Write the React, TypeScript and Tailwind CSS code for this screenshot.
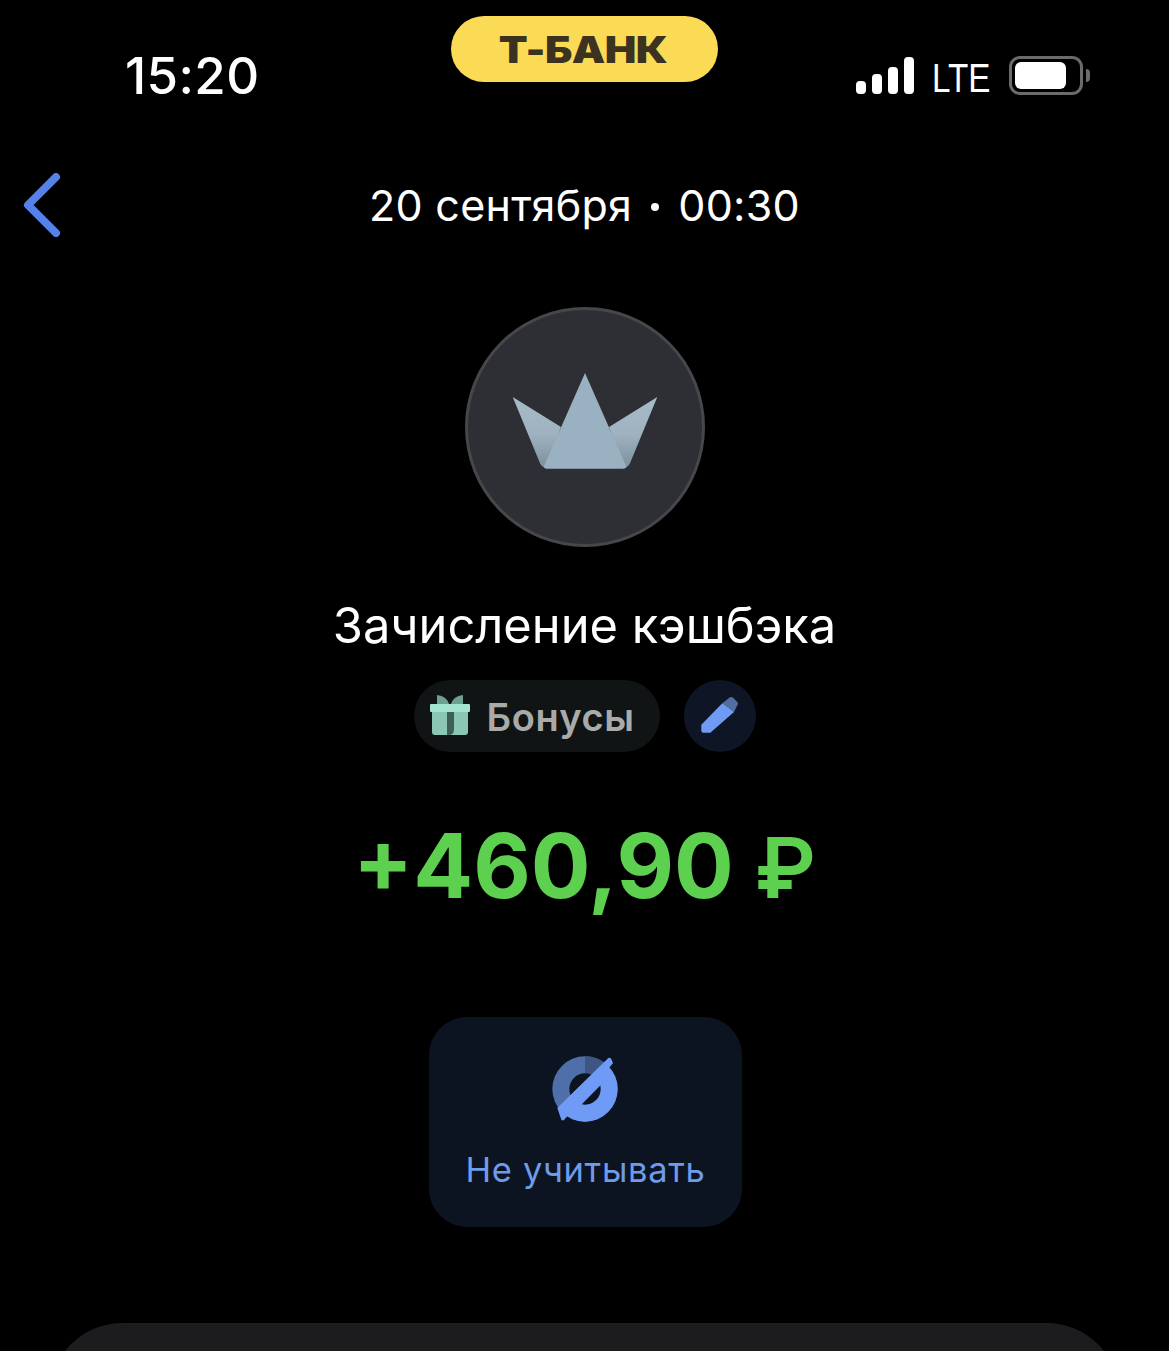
const sans = "font-['Inter','Noto_Sans',sans-serif]"

function CrownIcon() {
    return (
        <svg className="w-[150px] h-[102px] mb-[12px]" viewBox="510 370 150 102">
            <defs>
                <linearGradient id="wing" x1="0" y1="0" x2="0" y2="1">
                    <stop offset="0%" stopColor="#a6bac8" />
                    <stop offset="50%" stopColor="#9fb3c1" />
                    <stop offset="100%" stopColor="#7d909e" />
                </linearGradient>
            </defs>
            <path d="M512.7 397 L561 427 L546 468 Q541 467 539.5 462 Z" fill="url(#wing)" />
            <path d="M657.3 397 L609 427 L624 468 Q629 467 630.5 462 Z" fill="url(#wing)" />
            <path d="M585 373 L626 466 Q626.5 468.7 623 468.7 L547 468.7 Q543.5 468.7 544 466 Z" fill="#9ab1c1" />
        </svg>
    )
}

function GiftIcon() {
    return (
        <svg className="w-[42px] h-[42px]" viewBox="429 696 42 42">
            <path d="M437 696 Q447 697 449.5 706 L437 706 Z" fill="#6f9f93" />
            <path d="M463 696 Q453 697 450.5 706 L463 706 Z" fill="#6f9f93" />
            <rect x="430" y="705" width="40" height="8" rx="1" fill="#a2e3d2" />
            <path d="M432 713 L468 713 L468 733 Q468 736 465 736 L435 736 Q432 736 432 733 Z" fill="#8cc6b5" />
            <path d="M447 713 L454 713 L454 730 Q454 736 449 736 L447 736 Z" fill="#3e5f56" />
        </svg>
    )
}

function PencilIcon() {
    return (
        <svg className="w-[44px] h-[40px]" viewBox="895 80 132 120">
            <path d="M968 102 L991 84 Q996 81 1001 86 L1013 98 Q1017 103 1013 108 L1003 128 Z" fill="#52709f" />
            <path d="M905 166 L968 102 L1003 128 L932 190 L911 190 Q905 190 905 184 Z" fill="#6f9bf6" />
        </svg>
    )
}

function HideIcon() {
    return (
        <svg className="w-[74px] h-[72px]" viewBox="390 125 222 216">
            <defs>
                <clipPath id="lower">
                    <path d="M398 308 L585 124 L640 124 L640 360 L398 360 Z" />
                </clipPath>
                <clipPath id="moon">
                    <path d="M450 318 L566 200 L620 240 L560 330 Z" />
                </clipPath>
            </defs>
            <circle cx="498" cy="233" r="98" fill="#4e6fa9" />
            <path d="M498 233 L498 135 A98 98 0 0 1 560 157 Z" fill="#3f5685" />
            <circle cx="498" cy="233" r="47" fill="#0c1422" />
            <circle cx="498" cy="233" r="98" fill="#6f9bf6" clipPath="url(#lower)" />
            <path d="M415 290 L568 140 Q574 137 578 145 L582 156 L435 326 Q431 329 427 325 Z" fill="#6f9bf6" />
            <circle cx="498" cy="233" r="47" fill="#0c1422" clipPath="url(#moon)" />
        </svg>
    )
}

function StatusBar() {
    return (
        <div className="flex h-[110px] pt-4 items-start">
            <div className={`w-[451px] pl-[125px] pt-[29px] text-[51px] leading-[62px] tracking-[0.4px] font-medium text-white ${sans}`}>
                15:20
            </div>
            <div className="w-[267px] h-[66px] rounded-[33px] bg-[#fbdb55] flex items-center justify-center">
                <span className="mr-[4px] scale-x-[1.14] text-[37px] leading-none font-black text-[#3b3320] tracking-[-0.5px] font-['Inter',sans-serif]">
                    Т-БАНК
                </span>
            </div>
            <div className="flex items-end pl-[138px] pt-[40px] h-[78px]">
                <div className="flex items-end gap-[6px]">
                    <div className="w-[10px] h-[13px] rounded-[4px] bg-white" />
                    <div className="w-[10px] h-[20px] rounded-[4px] bg-white" />
                    <div className="w-[10px] h-[27px] rounded-[4px] bg-white" />
                    <div className="w-[10px] h-[37px] rounded-[4px] bg-white" />
                </div>
                <span className="ml-[18px] mr-[20px] w-[57px] origin-left scale-x-[0.83] text-[40px] leading-[30px] mb-[1px] font-medium text-white font-['Liberation_Sans',sans-serif]">
                    LTE
                </span>
                <div className="flex items-center">
                    <div className="w-[74px] h-[39px] rounded-[11px] border-[3px] border-[#6b6b6b] p-[3px] pr-[14px] mb-[-1px]">
                        <div className="w-full h-full rounded-[6px] bg-white" />
                    </div>
                    <div className="w-[4px] h-[13px] ml-[3px] rounded-r-full bg-[#6b6b6b]" />
                </div>
            </div>
        </div>
    )
}

export default function App() {
    return (
        <div className={`w-[1169px] h-[1351px] bg-black overflow-hidden flex flex-col ${sans}`}>
            <StatusBar />

            <div className="flex items-center h-[64px] mt-[66px] pl-[23px]">
                <svg className="w-[38px] h-[64px]" viewBox="0 0 38 64" fill="none">
                    <path d="M33 4 L5 32 L33 60" stroke="#5581ea" strokeWidth="8" strokeLinecap="round" strokeLinejoin="round" />
                </svg>
                <div className="w-[1047px] flex items-center justify-center gap-[19px] text-[43px] leading-[64px] text-white tracking-[0.3px]">
                    <span>20 сентября</span>
                    <span className="w-[8px] h-[8px] mt-[3px] rounded-full bg-white" />
                    <span>00:30</span>
                </div>
            </div>

            <div className="flex flex-col items-center">
                <div className="w-[240px] h-[240px] mt-[70px] rounded-full bg-[#2e2f34] border-[3px] border-[#46474a] flex items-center justify-center">
                    <CrownIcon />
                </div>

                <h1 className="mt-[49px] text-[48.8px] leading-[60px] font-normal text-white">
                    Зачисление кэшбэка
                </h1>

                <div className="flex gap-[24px] mt-[24px]">
                    <div className="flex items-center h-[72px] w-[246px] pl-[15px] gap-[16px] rounded-[36px] bg-[#111414]">
                        <GiftIcon />
                        <span className="mt-[2px] text-[38px] tracking-[0.6px] font-semibold text-[#a9abab]">Бонусы</span>
                    </div>
                    <div className="w-[72px] h-[72px] rounded-full bg-[#0e1626] flex items-center justify-center">
                        <PencilIcon />
                    </div>
                </div>

                <div className="mt-[59px] flex items-baseline gap-[21px] text-[88.7px] leading-[110px] font-bold text-[#5ed04f]">
                    <span>+460,90</span>
                    <span className="text-[84px] leading-none font-semibold">₽</span>
                </div>

                <button className="mt-[96px] ml-[2px] w-[313px] h-[210px] rounded-[38px] bg-[#0c1422] flex flex-col items-center pt-[36px]">
                    <HideIcon />
                    <span className="mt-[23px] text-[34.5px] leading-[44px] tracking-[0.7px] text-[#6f9be8]">Не учитывать</span>
                </button>
            </div>

            <div className="mt-[96px] mx-[50px] h-[120px] shrink-0 rounded-t-[72px] bg-[#1c1c1e]" />
        </div>
    )
}
